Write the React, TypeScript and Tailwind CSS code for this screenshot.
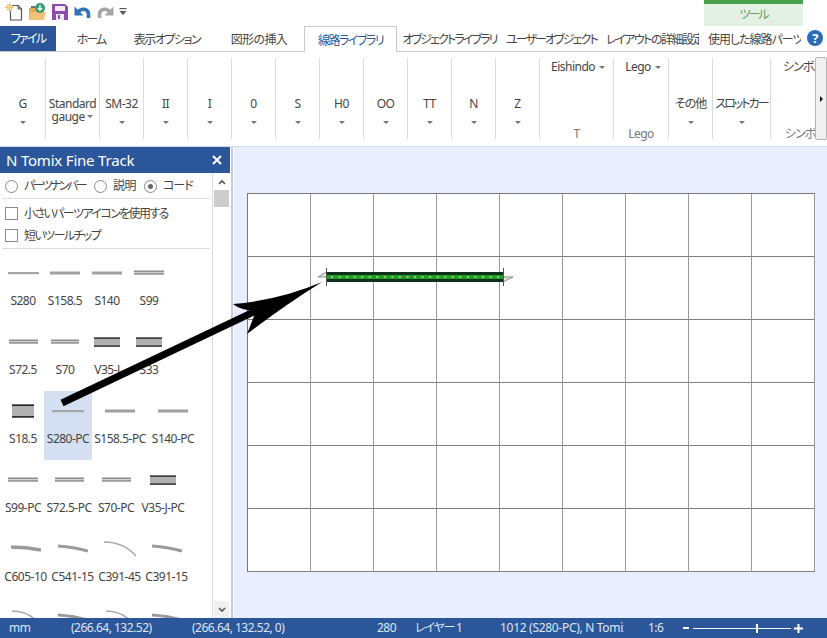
const tabs = [
  { label: "ホーム", cls: "w-[70px] justify-center tracking-[-2px]" },
  { label: "表示オプション", cls: "w-[82px] justify-center tracking-[-1.5px]" },
  { label: "図形の挿入", cls: "w-[96px] justify-center pl-[6px] tracking-[-0.6px]" },
];

const tabsRight = [
  { label: "オブジェクトライブラリ", cls: "w-[105px] justify-center tracking-[-1.9px]" },
  { label: "ユーザーオブジェクト", cls: "w-[103px] justify-start pl-[4px] tracking-[-1.9px]" },
  { label: "レイアウトの詳細設定", cls: "w-[94px] justify-start pl-[1px] tracking-[-1.5px]" },
  { label: "使用した線路パーツ", cls: "w-[102px] justify-start pl-[9px] tracking-[-1px]" },
];

const gauges = [
  { label: "G", cls: "w-[46px]" },
  { label: "Standard gauge", cls: "w-[54px]", inline: true },
  { label: "SM-32", cls: "w-[44px]" },
  { label: "II", cls: "w-[44px]" },
  { label: "I", cls: "w-[44px]" },
  { label: "0", cls: "w-[44px]" },
  { label: "S", cls: "w-[44px]" },
  { label: "H0", cls: "w-[44px]" },
  { label: "OO", cls: "w-[44px]" },
  { label: "TT", cls: "w-[44px]" },
  { label: "N", cls: "w-[44px]" },
  { label: "Z", cls: "w-[44px]" },
];

type Icon = { kind: string; w: number };

const rows: { label: string; cls: string; icon: Icon; selected?: boolean }[][] = [
  [
    { label: "S280", cls: "w-[42px]", icon: { kind: "single", w: 31 } },
    { label: "S158.5", cls: "w-[42px]", icon: { kind: "single3", w: 30 } },
    { label: "S140", cls: "w-[42px]", icon: { kind: "single3", w: 30 } },
    { label: "S99", cls: "w-[42px]", icon: { kind: "double", w: 30 } },
  ],
  [
    { label: "S72.5", cls: "w-[42px]", icon: { kind: "double", w: 29 } },
    { label: "S70", cls: "w-[42px]", icon: { kind: "double", w: 28 } },
    { label: "V35-J", cls: "w-[42px]", icon: { kind: "wide", w: 26 } },
    { label: "S33", cls: "w-[42px]", icon: { kind: "wide", w: 26 } },
  ],
  [
    { label: "S18.5", cls: "w-[42px]", icon: { kind: "tall", w: 22 } },
    { label: "S280-PC", cls: "w-[48px]", icon: { kind: "single", w: 32 }, selected: true },
    { label: "S158.5-PC", cls: "w-[56px]", icon: { kind: "single3", w: 30 } },
    { label: "S140-PC", cls: "w-[50px]", icon: { kind: "single3", w: 30 } },
  ],
  [
    { label: "S99-PC", cls: "w-[42px]", icon: { kind: "double", w: 30 } },
    { label: "S72.5-PC", cls: "w-[50px]", icon: { kind: "double", w: 29 } },
    { label: "S70-PC", cls: "w-[44px]", icon: { kind: "double", w: 29 } },
    { label: "V35-J-PC", cls: "w-[50px]", icon: { kind: "wide", w: 26 } },
  ],
  [
    { label: "C605-10", cls: "w-[47px]", icon: { kind: "c10", w: 30 } },
    { label: "C541-15", cls: "w-[47px]", icon: { kind: "c15", w: 30 } },
    { label: "C391-45", cls: "w-[47px]", icon: { kind: "c45", w: 32 } },
    { label: "C391-15", cls: "w-[47px]", icon: { kind: "c15", w: 30 } },
  ],
  [
    { label: "C317-45", cls: "w-[47px]", icon: { kind: "c45", w: 28 } },
    { label: "C317-15", cls: "w-[47px]", icon: { kind: "c15", w: 30 } },
    { label: "C280-45", cls: "w-[47px]", icon: { kind: "c45", w: 28 } },
    { label: "C280-15", cls: "w-[47px]", icon: { kind: "c15", w: 30 } },
  ],
];

function PartIcon({ icon }: { icon: Icon }) {
  const { kind, w } = icon;
  const body = () => {
    switch (kind) {
      case "single":
        return <rect x="0" y="7" width={w} height="2.2" fill="#a6a6a6" />;
      case "single3":
        return <rect x="0" y="6.5" width={w} height="3" fill="#a0a0a0" />;
      case "double":
        return (
          <>
            <rect x="0" y="5.5" width={w} height="1.6" fill="#8e8e8e" />
            <rect x="0" y="7.1" width={w} height="1" fill="#cfcfcf" />
            <rect x="0" y="8.1" width={w} height="1.6" fill="#8e8e8e" />
          </>
        );
      case "wide":
        return (
          <>
            <rect x="0" y="3.5" width={w} height="9" fill="#b0b0b0" />
            <rect x="0" y="3.5" width={w} height="1.2" fill="#111" />
            <rect x="0" y="11.5" width={w} height="1.2" fill="#111" />
          </>
        );
      case "tall":
        return (
          <>
            <rect x="0" y="1.5" width={w} height="13" fill="#b0b0b0" />
            <rect x="0" y="1.5" width={w} height="1.4" fill="#111" />
            <rect x="0" y="13.2" width={w} height="1.4" fill="#111" />
          </>
        );
      case "c10":
        return <path d="M0 6 Q15 6 30 9" fill="none" stroke="#9a9a9a" strokeWidth="3.4" />;
      case "c15":
        return <path d="M0 5 Q16 6 30 10" fill="none" stroke="#9a9a9a" strokeWidth="3" />;
      default:
        return <path d={`M0 1 Q${w * 0.62} 1 ${w} 15`} fill="none" stroke="#a8a8a8" strokeWidth="1.4" />;
    }
  };
  return (
    <svg width={w} height="16" viewBox={`0 0 ${w} 16`}>
      {body()}
    </svg>
  );
}

function Caret() {
  return <span className="inline-block w-0 h-0 border-x-[3px] border-x-transparent border-t-[3px] border-t-[#777]" />;
}

function QuickAccess() {
  return (
    <div className="h-[26px] w-[140px] flex items-center pl-[5px] pb-[3px] gap-[4px]">
      <svg width="18" height="18" viewBox="0 0 18 18">
        <path d="M7 2.5h6l3.5 3.5v11H5.5V8" fill="#fff" stroke="#555" strokeWidth="1.2" />
        <path d="M13 2.5V6h3.5" fill="none" stroke="#555" strokeWidth="1" />
        <path d="M4.5 0.5v8M0.5 4.5h8M1.8 1.8l5.4 5.4M7.2 1.8L1.8 7.2" stroke="#f2a53a" strokeWidth="1.2" />
        <circle cx="4.5" cy="4.5" r="2" fill="#fbd27a" />
      </svg>
      <svg width="18" height="18" viewBox="0 0 18 18" className="ml-[1px]">
        <path d="M1 5h6v2h9v10H1z" fill="#e8a950" />
        <path d="M3 3h4v2H3z" fill="#6d6d6d" />
        <path d="M1 17l2-8h15l-2 8z" fill="#f2c27c" />
        <circle cx="12" cy="5" r="5" fill="#2f9e6e" />
        <path d="M12 2v5M9.8 5l2.2 2.4L14.2 5" stroke="#fff" strokeWidth="1.3" fill="none" />
      </svg>
      <svg width="16" height="16" viewBox="0 0 16 16" className="ml-[2px]">
        <path d="M0 0h13l3 3v13H0z" fill="#8a4bad" />
        <rect x="3" y="2" width="10" height="5" fill="#f3e9f7" />
        <rect x="4" y="10" width="8" height="6" fill="#f3e9f7" />
        <rect x="6" y="11" width="2" height="4" fill="#8a4bad" />
      </svg>
      <svg width="17" height="14" viewBox="0 0 17 14" className="ml-[2px]">
        <path d="M4 7 C7 3 14 3 14.5 9 L14.5 13" fill="none" stroke="#2e75b6" strokeWidth="3.6" />
        <path d="M0.5 1.5 V10.5 H9.5 Z" fill="#2e75b6" />
      </svg>
      <svg width="17" height="14" viewBox="0 0 17 14" className="ml-[2px]">
        <path d="M13 7 C10 3 3 3 2.5 9 L2.5 13" fill="none" stroke="#a6a6a6" strokeWidth="3.6" />
        <path d="M16.5 1.5 V10.5 H7.5 Z" fill="#a6a6a6" />
      </svg>
      <svg width="8" height="7" viewBox="0 0 8 7" className="ml-[1px]">
        <rect x="0.5" y="0" width="7" height="1.2" fill="#555" />
        <path d="M0.5 3h7L4 7z" fill="#555" />
      </svg>
    </div>
  );
}

export default function App() {
  return (
    <div className="relative w-[827px] h-[638px] overflow-hidden flex flex-col bg-white text-[12px] tracking-[-0.5px] text-[#444] font-['Noto_Sans','Noto_Sans_CJK_JP',sans-serif] [font-feature-settings:'palt']">
      {/* title area */}
      <div className="h-[26px] flex shrink-0">
        <QuickAccess />
        <div className="ml-[564px] w-[99px] flex flex-col">
          <div className="h-[4px] bg-[#4aa04a]" />
          <div className="h-[22px] bg-[#e4f0e4] text-[#5f9e6a] flex items-center justify-center tracking-[-2px]">ツール</div>
        </div>
      </div>

      {/* tabs */}
      <div className="relative h-[26px] shrink-0 flex border-b border-[#c9c9c9] whitespace-nowrap">
        <div className="w-[56px] h-[25px] bg-[#2b579a] text-white flex items-center justify-center tracking-[-1.7px]">ファイル</div>
        {tabs.map((t) => (
          <div key={t.label} className={`h-[25px] pt-[2px] flex items-center ${t.cls}`}>
            {t.label}
          </div>
        ))}
        <div className="w-[93px] h-[26px] -mb-px pt-[2px] bg-white border border-b-0 border-[#c9c9c9] text-[#2b579a] flex items-center justify-center tracking-[-1.5px]">
          線路ライブラリ
        </div>
        {tabsRight.map((t) => (
          <div key={t.label} className={`h-[25px] pt-[2px] flex items-center overflow-hidden ${t.cls}`}>
            {t.label}
          </div>
        ))}
        <svg width="16" height="16" viewBox="0 0 16 16" className="absolute left-[807px] top-[4px]">
          <circle cx="8" cy="8" r="8" fill="#2b6cb8" />
          <text x="8" y="12.5" textAnchor="middle" fontSize="13" fontWeight="700" fill="#fff">?</text>
        </svg>
      </div>

      {/* ribbon */}
      <div className="h-[95px] shrink-0 flex pt-[6px] pb-[7px] border-b border-[#d5d8e6] leading-[14px]">
        {gauges.map((g) => (
          <div key={g.label} className={`${g.cls} shrink-0 border-r border-[#dcdcdc] flex flex-col items-center pt-[39px] text-center`}>
            {g.inline ? (
              <div className="leading-[13px]">
                Standard
                <br />
                gauge <span className="relative -top-[3px]"><Caret /></span>
              </div>
            ) : (
              <>
                <div className="h-[14px]">{g.label}</div>
                <div className="mt-[5px] leading-[8px]"><Caret /></div>
              </>
            )}
          </div>
        ))}
        <div className="w-[74px] shrink-0 border-r border-[#dcdcdc] flex flex-col items-center pt-[2px]">
          <div className="h-[14px] pl-[3px] flex items-center gap-[4px]">Eishindo <Caret /></div>
          <div className="mt-[53px] text-[#777]">T</div>
        </div>
        <div className="w-[55px] shrink-0 border-r border-[#dcdcdc] flex flex-col items-center pt-[2px]">
          <div className="h-[14px] pl-[4px] flex items-center gap-[4px]">Lego <Caret /></div>
          <div className="mt-[53px] text-[#777]">Lego</div>
        </div>
        <div className="w-[44px] shrink-0 border-r border-[#dcdcdc] flex flex-col items-center pt-[39px] tracking-[-1px]">
          <div className="h-[14px]">その他</div>
          <div className="mt-[5px] leading-[8px]"><Caret /></div>
        </div>
        <div className="w-[58px] shrink-0 border-r border-[#dcdcdc] flex flex-col items-center pt-[39px] tracking-[-2px]">
          <div className="h-[14px] whitespace-nowrap">スロットカー</div>
          <div className="mt-[5px] leading-[8px]"><Caret /></div>
        </div>
        <div className="w-[44px] shrink-0 overflow-hidden whitespace-nowrap pl-[12px] pt-[2px] tracking-[-1px]">
          <div className="h-[14px]">シンボル</div>
          <div className="mt-[53px] pl-[2px] text-[#777]">シンボル</div>
        </div>
        <div className="w-[12px] -mt-[1px] -mb-[1px] shrink-0 bg-[#f0f0f0] border border-[#b5b5b5] rounded-[2px] flex items-center justify-center">
          <span className="w-0 h-0 border-y-[3px] border-y-transparent border-l-[3px] border-l-[#111]" />
        </div>
      </div>

      {/* body */}
      <div className="flex-1 flex min-h-0">
        <div className="w-[230px] shrink-0 flex flex-col">
          <div className="h-[26px] shrink-0 bg-[#2b579a] text-white flex items-center justify-between pl-[6px] pr-[8px]">
            <span className="text-[15px] tracking-[-0.2px]">N Tomix Fine Track</span>
            <svg width="10" height="10" viewBox="0 0 10 10">
              <path d="M1 1l8 8M9 1l-8 8" stroke="#fff" strokeWidth="2" />
            </svg>
          </div>
          <div className="flex-1 flex min-h-0">
            <div className="w-[213px] shrink-0 border-r border-[#d9d9d9] overflow-hidden">
              <div className="h-[26px] mx-[2px] pt-[1px] border-b border-[#dcdcdc] flex items-center pl-[3px] whitespace-nowrap">
                <span className="w-[13px] h-[13px] rounded-full border border-[#8a8a8a]" />
                <span className="ml-[6px] w-[70px] tracking-[-2.6px]">パーツナンバー</span>
                <span className="w-[13px] h-[13px] rounded-full border border-[#8a8a8a]" />
                <span className="ml-[6px] w-[31px]">説明</span>
                <span className="w-[13px] h-[13px] rounded-full border border-[#8a8a8a] flex items-center justify-center">
                  <span className="w-[5px] h-[5px] rounded-full bg-[#666]" />
                </span>
                <span className="ml-[6px] tracking-[-1px]">コード</span>
              </div>
              <div className="h-[50px] mx-[2px] pt-[2px] border-b border-[#dcdcdc] flex flex-col justify-center gap-[9px] pl-[3px] tracking-[-1.6px]">
                <div className="flex items-center h-[13px]">
                  <span className="w-[13px] h-[13px] border border-[#8a8a8a]" />
                  <span className="ml-[6px]">小さいパーツアイコンを使用する</span>
                </div>
                <div className="flex items-center h-[13px]">
                  <span className="w-[13px] h-[13px] border border-[#8a8a8a]" />
                  <span className="ml-[6px]">短いツールチップ</span>
                </div>
              </div>
              <div className="pl-[2px] pt-[4px]">
                {rows.map((row, i) => (
                  <div key={i} className="h-[69px] flex">
                    {row.map((p) => (
                      <div
                        key={p.label}
                        className={`${p.cls} shrink-0 h-[69px] flex flex-col items-center pt-[12px] whitespace-nowrap ${p.selected ? "bg-[#d4e0f2]" : ""}`}
                      >
                        <PartIcon icon={p.icon} />
                        <div className="mt-[13px] leading-[14px]">{p.label}</div>
                      </div>
                    ))}
                  </div>
                ))}
              </div>
            </div>
            <div className="w-[17px] shrink-0 flex flex-col items-center">
              <div className="h-[17px] flex items-center justify-center">
                <svg width="8" height="6" viewBox="0 0 8 6"><path d="M1 5l3-3 3 3" fill="none" stroke="#555" strokeWidth="1.6" /></svg>
              </div>
              <div className="w-[15px] h-[17px] bg-[#cdcdcd]" />
              <div className="flex-1" />
              <div className="w-[15px] h-[17px] bg-[#f0f0f0] flex items-center justify-center">
                <svg width="8" height="6" viewBox="0 0 8 6"><path d="M1 1l3 3 3-3" fill="none" stroke="#555" strokeWidth="1.6" /></svg>
              </div>
            </div>
          </div>
        </div>
        <div className="w-[4px] shrink-0 flex">
          <div className="w-[1px]" />
          <div className="w-[2px] bg-[#c8cbd6]" />
        </div>
        {/* canvas */}
        <div className="flex-1 bg-[#e8eefd] pl-[13px] pt-[46px]">
          <div className="w-[568px] h-[379px] bg-white border-t border-l border-[#777] grid grid-cols-[repeat(9,63px)] grid-rows-[repeat(6,63px)]">
            {Array.from({ length: 54 }).map((_, i) => (
              <div key={i} className="border-r border-b border-r-[#9a9a9a] border-b-[#808080]" />
            ))}
          </div>
        </div>
      </div>

      {/* status bar */}
      <div className="h-[20px] shrink-0 bg-[#2b579a] text-[#dde6f4] flex items-center whitespace-nowrap">
        <div className="w-[71px] pl-[9px]">mm</div>
        <div className="w-[121px]">(266.64, 132.52)</div>
        <div className="w-[185px]">(266.64, 132.52, 0)</div>
        <div className="w-[38px]">280</div>
        <div className="w-[85px] tracking-[-1.2px]">レイヤー 1</div>
        <div className="w-[124px] overflow-hidden tracking-[-0.3px]">1012 (S280-PC), N Tomix</div>
        <div className="ml-[24px] w-[24px]">1:6</div>
        <div className="w-[11px]" />
        <div className="w-[6px] h-[2px] bg-white" />
        <div className="relative ml-[4px] w-[98px] h-[1px] bg-white">
          <span className="absolute left-[63px] -top-[4px] w-[2px] h-[9px] bg-white" />
        </div>
        <svg width="9" height="9" viewBox="0 0 9 9" className="ml-[3px]">
          <path d="M4.5 0v9M0 4.5h9" stroke="#fff" strokeWidth="2" />
        </svg>
      </div>

      {/* placed track and callout arrow over the page */}
      <svg width="827" height="638" viewBox="0 0 827 638" className="absolute left-0 top-0 pointer-events-none">
        <path d="M326 272 L318 277 H326 M503 282 L513 277 H503" fill="#e4e4e4" stroke="#777" strokeWidth="0.8" />
        <path d="M326.5 268V286M503.5 268V286" stroke="#555" strokeWidth="1" />
        <rect x="327" y="272" width="176" height="10" fill="#10301c" />
        <rect x="327" y="275" width="176" height="4" fill="#1aa31a" />
        {Array.from({ length: 24 }).map((_, i) => (
          <rect key={i} x={331 + i * 7.55} y="276" width="2" height="2" fill="#a8b8a8" />
        ))}
        <path d="M62 403 L258 310" stroke="#000" strokeWidth="7" />
        <path d="M322 282 Q280 300 233 304 Q240 310 256 311 L247 334 Q285 305 322 282 Z" fill="#000" />
      </svg>
    </div>
  );
}
